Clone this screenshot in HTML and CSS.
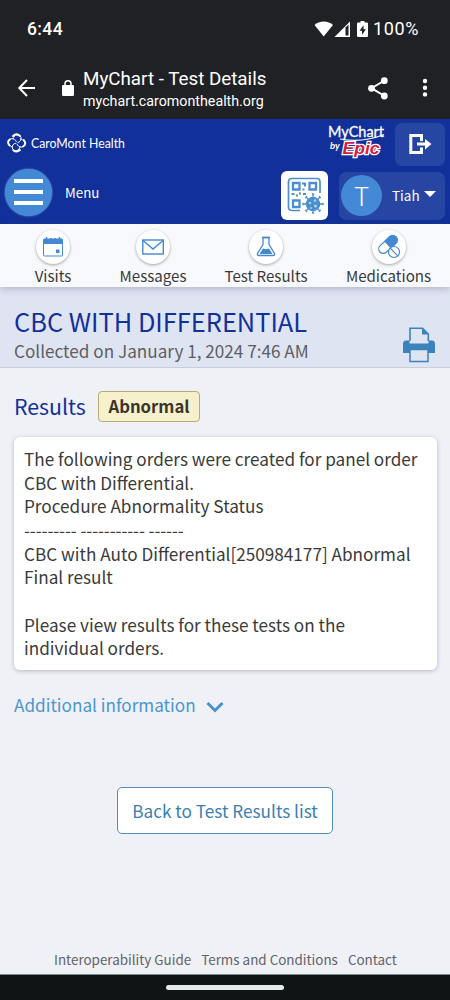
FILE: index.html
```html
<!DOCTYPE html>
<html lang="en">
<head>
<meta charset="utf-8">
<title>MyChart - Test Details</title>
<link rel="stylesheet" href="styles.css">
</head>
<body>
<div class="phone">
  <div class="status">
    <span class="time">6:44</span>
    <svg class="status-icons" width="57" height="20" viewBox="0 0 57 20">
      <path d="M0.500 6C5 1.300 14.500 1.300 19 6L9.700 17.500Z" fill="#fff"/>
      <path d="M20.500 18L36 2.500V18Z" fill="#fff"/>
      <path d="M31.500 8.500L34.500 5.500V16.500H31.500Z" fill="#202124"/>
      <path d="M46.500 2h4v1.500h2.500q1 0 1 1V17q0 1-1 1h-9q-1 0-1-1V4.500q0-1 1-1h2.500Z" fill="#fff"/>
      <path d="M49.500 6.200l-4 5.500h2.500v4l4-5.500h-2.500Z" fill="#202124"/>
    </svg>
    <span class="battery">100%</span>
  </div>
  <div class="browser">
    <svg class="back" width="20" height="20" viewBox="0 0 20 20" fill="none" stroke="#fff" stroke-width="2"><path d="M18 10H2.500M10 2L2.300 10L10 18"/></svg>
    <svg class="lock" width="12" height="17" viewBox="0 0 12 17"><rect y="5" width="12" height="11" rx="1.300" fill="#fff"/><path d="M3 6V3.800a3 3 0 0 1 6 0V6" fill="none" stroke="#fff" stroke-width="1.500"/></svg>
    <div class="page-id"><span class="page-name">MyChart - Test Details</span><span class="page-url">mychart.caromonthealth.org</span></div>
    <svg class="share" width="20" height="23" viewBox="0 0 20 23" fill="#fff"><path d="M16.500 3.500L3.500 11.200L16.500 19" fill="none" stroke="#fff" stroke-width="2"/><circle cx="16.300" cy="3.700" r="3.400"/><circle cx="3.500" cy="11.300" r="3.400"/><circle cx="16.300" cy="19" r="3.400"/></svg>
    <svg class="dots" width="6" height="20" viewBox="0 0 6 20" fill="#fff"><circle cx="3" cy="3" r="2.200"/><circle cx="3" cy="9.700" r="2.200"/><circle cx="3" cy="16.400" r="2.200"/></svg>
  </div>
  <header class="header">
    <div class="brand-row">
      <svg class="caromont" width="132" height="28" viewBox="0 -3 132 28">
        <g fill="none" stroke="#fff" stroke-linecap="round">
          <path d="M6 5.500C6.500 1.500 13 .5 14 4.500C14.500 7 13 9 11 9.500" stroke-width="1"/>
          <path d="M13.500 6C18 6.500 19.500 13 15 14C12.500 14.500 10.500 13 10 11" stroke-width="1"/>
          <path d="M13 13.500C13 18 6.500 19.500 5.200 15C4.800 12.500 6.500 10.500 8.500 10.300" stroke-width="1"/>
          <path d="M5.500 14C1 13-.3 7 4 5.800C6.500 5.300 8.500 6.500 9.300 8.500" stroke-width="1"/>
          <path d="M6 3Q9.500-.5 13 3M16.800 7Q20 11 16 13.500M13 17Q9.500 20 6.300 17.200M2.500 12.500Q-.5 9 2.800 6.500" stroke-width="1.900"/>
        </g>
        <text x="24" y="15" class="caro-name" textLength="94" lengthAdjust="spacingAndGlyphs">CaroMont Health</text>
      </svg>
      <svg class="mychart" width="62" height="42" viewBox="0 -4 62 42">
        <text x="1" y="12.500" class="my-name" textLength="56" lengthAdjust="spacingAndGlyphs">MyChart</text>
        <path d="M13 15Q36 19 57 10.500" fill="none" stroke="#fff" stroke-width="1.200"/>
        <text x="3" y="25" class="my-by">by</text>
        <text x="15.500" y="30" class="my-epic" textLength="37" lengthAdjust="spacingAndGlyphs">Epic</text>
      </svg>
      <div class="exit"><svg width="23" height="21" viewBox="0 0 23 21" fill="none" stroke="#fff"><path d="M12.500 7V1.500H1.800V18.500H12.500V13.500" stroke-width="3"/><path d="M8 10H18" stroke-width="3"/><path d="M16 5L22.500 10L16 15.500Z" fill="#fff" stroke="none"/></svg></div>
    </div>
    <div class="menu-row">
      <div class="burger"><i></i><i></i><i></i></div>
      <span class="menu-label">Menu</span>
      <div class="qr">
        <svg width="36" height="36" viewBox="0 0 36 36" fill="none" stroke="#4b8fd0">
          <path d="M33 16V5Q33 1.500 29.500 1.500H5Q1.500 1.500 1.500 5V30Q1.500 33.500 5 33.500H13" stroke-width="1.700"/>
          <path d="M6 6H12.500V12.500H6ZM22.500 6H29V12.500H22.500ZM6 23.500H12.500V30H6Z" stroke-width="2.300"/>
          <path d="M15 6.500h3v3M17.500 12.500h-2M4.500 17h3M9 18.500h2M12 16.500h2M16 17h3" stroke-width="2"/>
          <path d="M26 17V36M16 27H36M19 20L33 34M33 20L19 34" stroke-width="1.300"/>
          <path d="M24.800 17h2.400M24.800 36h2.400M16 25.800v2.400M36 25.800v2.400M18.300 21l1.700-1.700M32 19.300l1.700 1.700M18.300 33l1.700 1.700M32 34.700l1.700-1.700" stroke-width="1.300"/>
          <circle cx="26" cy="27" r="6.800" fill="#4b8fd0"/>
          <g fill="#a6d6f4" stroke="none"><circle cx="23" cy="26" r="1.300"/><circle cx="28" cy="23.500" r="1.300"/><circle cx="28.500" cy="29" r="1.500"/><circle cx="24" cy="31" r="1"/></g>
        </svg>
      </div>
      <div class="user"><span class="avatar">T</span><span class="user-name">Tiah</span><i class="caret"></i></div>
    </div>
  </header>
  <nav class="nav">
    <div class="nav-item visits"><span class="disc"><svg width="22" height="22" viewBox="0 0 22 22"><rect x="1.500" y="3" width="19" height="17" rx="1" fill="none" stroke="#4489d0" stroke-width="1"/><path d="M1.500 3h19v5h-19Z" fill="#4489d0"/><path d="M4.500 1v3M9 2v1M13 2v1M17.500 1v3" stroke="#4489d0" stroke-width="1.500"/><rect x="14" y="13.500" width="3.500" height="3.500" fill="#4489d0"/></svg></span><span class="nav-label">Visits</span></div>
    <div class="nav-item messages"><span class="disc"><svg width="22" height="22" viewBox="0 0 22 22" fill="none" stroke="#4489d0" stroke-width="1.400"><rect x=".8" y="4" width="20.500" height="14"/><path d="M1 4.500L11 13L21 4.500"/></svg></span><span class="nav-label">Messages</span></div>
    <div class="nav-item results-tab"><span class="disc"><svg width="22" height="22" viewBox="0 0 22 22"><path d="M8 2V8.500L2.500 17.500Q2 19.500 4 19.500H18Q20 19.500 19.500 17.500L14 8.500V2" fill="none" stroke="#4489d0" stroke-width="1.300"/><path d="M7 1.500H15" stroke="#4489d0" stroke-width="1.800"/><path d="M8 12.500Q11 13.500 14 12.500L17.500 18H4.500Z" fill="#4489d0"/></svg></span><span class="nav-label">Test Results</span></div>
    <div class="nav-item meds"><span class="disc"><svg width="24" height="24" viewBox="0 0 24 24" stroke="#4489d0" stroke-width="1.200"><g transform="rotate(-43 11 9.500)"><rect x="0" y="5" width="22" height="9" rx="4.500" fill="#fff"/><path d="M11 5H17.500a4.500 4.500 0 0 1 0 9H11Z" fill="#4489d0"/></g><circle cx="17" cy="17" r="5.500" fill="#fff"/><path d="M13.200 13.200L20.800 20.800"/></svg></span><span class="nav-label">Medications</span></div>
  </nav>
  <section class="title-band">
    <div><h1 class="title">CBC WITH DIFFERENTIAL</h1><p class="collected">Collected on January 1, 2024 7:46 AM</p></div>
    <svg class="printer" width="34" height="36" viewBox="0 0 34 36"><path d="M8 14V1.200H20.500L26.300 7V14" fill="none" stroke="#3b83bb" stroke-width="1.600"/><path d="M20 1V7.500H26.500Z" fill="#3b83bb"/><path d="M4 13.500H7.500V16.500H26.500V13.500H30Q33 13.500 33 17V26H1V17Q1 13.500 4 13.500Z" fill="#3b83bb"/><path d="M8 22.500H26V34.500H8Z" fill="#dfe4f2" stroke="#3b83bb" stroke-width="1.500"/></svg>
  </section>
  <main class="main">
    <div class="results-head"><h2 class="results">Results</h2><span class="badge">Abnormal</span></div>
    <div class="card">The following orders were created for panel order<br>CBC with Differential.<br>Procedure Abnormality Status<br><span class="dashes">--------- ----------- ------</span><br>CBC with Auto Differential[250984177] Abnormal<br>Final result<br><br>Please view results for these tests on the<br>individual orders.</div>
    <div class="more"><span>Additional information</span><svg class="chevron" width="18" height="12" viewBox="0 0 18 12"><path d="M1.500 2L9 9.500L16.500 2" fill="none" stroke="#4b90cb" stroke-width="3"/></svg></div>
    <div class="button">Back to Test Results list</div>
  </main>
  <footer class="footer"><span>Interoperability Guide</span><span>Terms and Conditions</span><span>Contact</span></footer>
  <div class="gesture"><i></i></div>
</div>
</body>
</html>
```
FILE: styles.css
```css
* { box-sizing: border-box; }
body { margin: 0; font-family: "Noto Sans CJK SC", "Noto Sans", sans-serif; color: #3a3a3a; }
h1, h2, p { margin: 0; font-weight: 400; }
svg, i { display: block; flex: none; }
svg { overflow: visible; }
.phone { width: 450px; height: 1000px; overflow: hidden; display: flex; flex-direction: column; background: #eff1f7; white-space: nowrap; }
.phone > * { flex: none; }

.status { height: 57px; background: #202124; color: #fff; display: flex; align-items: center; padding-left: 27px; font-family: Roboto, sans-serif; font-size: 18px; font-weight: 500; }
.time { width: 287px; letter-spacing: .4px; font-size: 17.500px; }
.battery { margin-left: 2px; font-weight: 400; letter-spacing: .6px; }
.browser { height: 62px; background: #202124; display: flex; align-items: center; color: #fff; padding-left: 17px; font-family: Roboto, sans-serif; }
.lock { margin-left: 25px; }
.page-id { width: 274px; margin-left: 9px; padding-top: 2px; display: flex; flex-direction: column; }
.page-name { font-size: 18.800px; line-height: 23px; }
.page-url { font-size: 14.250px; line-height: 20px; }
.share { margin-left: 11px; }
.dots { margin-left: 34px; }

.header { height: 105px; background: #11309a; color: #fff; }
.brand-row { height: 47px; padding: 4px 5px 0 7px; display: flex; align-items: flex-start; }
.caromont { margin-top: 7px; }
.caro-name { font-family: Lato, sans-serif; font-size: 14px; fill: #fff; }
.mychart { margin: -3px 6px 0 188px; }
.my-name { font-family: Lato, sans-serif; font-size: 15px; fill: #fff; stroke: #fff; stroke-width: .3px; }
.my-by { font-family: Lato, sans-serif; font-size: 9.500px; font-style: italic; font-weight: 700; fill: #fff; }
.my-epic { font-family: "Liberation Sans", sans-serif; font-size: 17px; font-style: italic; font-weight: 700; fill: #d4203f; stroke: #fff; stroke-width: 2.500px; paint-order: stroke; }
.exit { width: 50px; height: 43px; border-radius: 7px; background: #2746a4; display: flex; align-items: center; justify-content: center; }
.menu-row { height: 58px; padding: 2px 5px 0; display: flex; align-items: center; }
.burger { width: 47px; height: 47px; margin-top: -8px; border-radius: 50%; background: #4489d6; box-shadow: 0 0 2px #7dabdf; display: flex; flex-direction: column; align-items: center; justify-content: center; gap: 7px; }
.burger i { width: 29px; height: 4px; background: #fff; }
.menu-label { width: 216px; margin: -7px 0 0 13px; font-size: 13.300px; line-height: 20px; }
.qr { width: 47px; height: 49px; margin-top: -2px; border-radius: 6px; background: #fff; display: flex; align-items: center; justify-content: center; }
.user { width: 106px; height: 48px; margin: -1px 0 0 11px; border-radius: 7px; background: #2746a4; display: flex; align-items: center; padding-left: 2px; }
.avatar { width: 41px; height: 41px; border-radius: 50%; background: #4489d6; font-size: 26px; font-weight: 300; line-height: 40px; text-align: center; }
.user-name { margin: -2px 0 0 10px; font-size: 13.500px; line-height: 20px; }
.caret { margin: -3px 0 0 4px; border: 6px solid transparent; border-top: 6.500px solid #fff; border-bottom: 0; }

.nav { height: 63px; background: #f8f9fd; position: relative; box-shadow: 0 2px 7px rgba(70,80,110,.3); display: flex; padding-top: 6px; }
.nav-item { display: flex; flex-direction: column; align-items: center; }
.visits { width: 106px; }
.messages { width: 94px; }
.results-tab { width: 132px; }
.meds { width: 113px; }
.disc { width: 34px; height: 34px; border-radius: 50%; background: #fff; box-shadow: 0 1px 3px rgba(60,60,60,.45); display: flex; align-items: center; justify-content: center; }
.nav-label { font-size: 15.100px; line-height: 22px; }

.title-band { height: 81px; background: #dfe4f2; border-bottom: 1px solid #c9cedb; display: flex; justify-content: space-between; padding: 18px 14px 0; }
.title { font-size: 25.400px; line-height: 32px; color: #11309a; }
.collected { font-size: 17.150px; line-height: 24px; margin-top: 2px; color: #5d5e63; }
.printer { margin-top: 22px; }
.main { height: 576px; padding: 23px 14px 0; }
.results-head { display: flex; align-items: flex-start; height: 46px; }
.results { width: 84px; font-size: 21.300px; line-height: 30px; color: #11309a; }
.badge { width: 102px; height: 31px; border: 1px solid #b6ac72; border-radius: 4px; background: #f7f0cc; text-align: center; font-size: 16.700px; font-weight: 600; line-height: 28px; color: #38352b; }
.card { width: 423px; height: 233px; padding: 9.800px 10px; border-radius: 6px; background: #fff; box-shadow: 0 1px 4px rgba(40,50,80,.3); font-size: 17.170px; line-height: 23.700px; }
.dashes { letter-spacing: -.1px; }
.more { height: 24px; margin-top: 23px; display: flex; align-items: center; gap: 10px; font-size: 17.150px; line-height: 24px; color: #4b96cd; }
.chevron { margin-top: 3px; }
.button { width: 216px; height: 47px; margin: 70px 0 0 103px; border: 1px solid #4f8fba; border-radius: 5px; background: #fff; text-align: center; color: #3b7fb0; font-size: 17.200px; line-height: 45px; }
.footer { height: 30px; padding-left: 54px; display: flex; gap: 10px; font-size: 13.430px; line-height: 30px; color: #626367; }
.gesture { height: 26px; background: #101415; border-top: 1px solid #7e898b; padding: 10px 0 0 166px; }
.gesture i { width: 118px; height: 5px; border-radius: 3px; background: #e4ebeb; }
```
